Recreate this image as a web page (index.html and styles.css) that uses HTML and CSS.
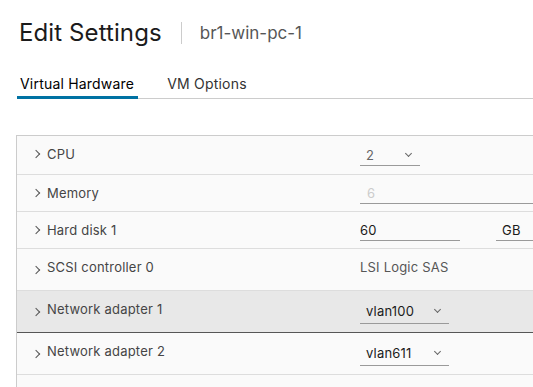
FILE: index.html
```html
<!DOCTYPE html>
<html lang="en">
<head>
    <meta charset="UTF-8">
    <title>Edit Settings</title>
    <link rel="stylesheet" href="styles.css">
</head>
<body>
    <!-- Dialog header -->
    <div class="header">
        <h1 class="title">Edit Settings</h1>
        <span class="divider"></span>
        <span class="subtitle">br1-win-pc-1</span>
    </div>

    <!-- Tabs -->
    <div class="tabs">
        <div class="tab active">Virtual Hardware</div>
        <div class="tab">VM Options</div>
    </div>

    <!-- Hardware list -->
    <div class="hw-table">
        <div class="row row-cpu">
            <div class="label"><span class="caret"></span>CPU</div>
            <div class="value">
                <div class="field select w-60 muted">2<span class="arrow"></span></div>
            </div>
        </div>
        <div class="row">
            <div class="label"><span class="caret"></span>Memory</div>
            <div class="value">
                <div class="field grow disabled">6</div>
            </div>
        </div>
        <div class="row">
            <div class="label"><span class="caret"></span>Hard disk 1</div>
            <div class="value">
                <div class="field input w-100">60</div>
                <div class="field unit grow">GB</div>
            </div>
        </div>
        <div class="row row-tall">
            <div class="label"><span class="caret low"></span>SCSI controller 0</div>
            <div class="value">
                <div class="plain">LSI Logic SAS</div>
            </div>
        </div>
        <div class="row row-tall selected">
            <div class="label"><span class="caret low"></span>Network adapter 1</div>
            <div class="value">
                <div class="field select tall w-89">vlan100<span class="arrow"></span></div>
            </div>
        </div>
        <div class="row row-tall">
            <div class="label"><span class="caret low"></span>Network adapter 2</div>
            <div class="value">
                <div class="field select tall w-89">vlan611<span class="arrow"></span></div>
            </div>
        </div>
        <div class="row row-tail"></div>
    </div>
</body>
</html>
```

FILE: styles.css
```css
/* Base */
html, body {
    margin: 0;
    height: 387px;
    overflow: hidden;
    background: #fff;
    font-family: Inter, "Open Sans", sans-serif;
    color: #333;
}

/* Header */
.header {
    display: flex;
    align-items: center;
    padding: 16px 0 0 19px;
    height: 34px;
}

.title {
    margin: 0;
    font-size: 24px;
    font-weight: 400;
    color: #1b1b1b;
    line-height: 34px;
    letter-spacing: 0.1px;
}

.divider {
    width: 1px;
    height: 22px;
    background: #ccc;
    margin: 0 18px 0 19px;
}

.subtitle {
    font-size: 17px;
    color: #565656;
    line-height: 34px;
}

/* Tabs */
.tabs {
    display: flex;
    margin: 24px 0 0 17px;
    border-bottom: 1px solid #ccc;
}

.tab {
    padding: 0 3px 2px;
    margin-right: 26px;
    font-size: 14px;
    line-height: 20px;
    letter-spacing: 0.2px;
    color: #333;
    border-bottom: 3px solid transparent;
    margin-bottom: -1px;
}

.tab.active {
    padding-right: 4px;
    color: #000;
    border-bottom-color: #0072a3;
}

/* Hardware table */
.hw-table {
    margin: 36px 0 0 16px;
    width: 540px;
    border-top: 1px solid #ccc;
    border-left: 1px solid #ccc;
    background: #fafafa;
}

.row {
    display: flex;
    height: 37px;
    border-bottom: 1px solid #ddd;
    box-sizing: border-box;
}

.row-cpu {
    height: 39px;
}

.row-tall {
    height: 42px;
}

.row-tail {
    height: 20px;
    border-bottom: none;
}

.row.selected {
    background: #e8e8e8;
    border-bottom-color: #565656;
}

.label {
    width: 343px;
    display: flex;
    align-items: flex-start;
    padding: 8px 0 0 16px;
    box-sizing: border-box;
    font-size: 13px;
    line-height: 20px;
    letter-spacing: 0.2px;
    color: #454545;
}

.caret {
    width: 5px;
    height: 5px;
    margin: 7px 8px 0 0;
    border-right: 1px solid #555;
    border-top: 1px solid #555;
    transform: rotate(45deg);
}

.caret.low {
    margin-top: 10px;
}

.value {
    flex: 1;
    display: flex;
    align-items: flex-start;
    padding-top: 8px;
    font-size: 13px;
    letter-spacing: 0.2px;
    color: #1b1b1b;
}

.row-cpu .value {
    padding-top: 9px;
}

.plain {
    line-height: 20px;
    color: #565656;
}

.field {
    display: flex;
    align-items: center;
    height: 20px;
    border-bottom: 1px solid #9a9a9a;
    box-sizing: content-box;
}

.field.tall {
    height: 24px;
}

.select {
    padding-left: 6px;
    position: relative;
}

.input {
    padding-left: 0;
}

.unit {
    margin-left: 36px;
    padding-left: 6px;
}

.w-60 { width: 54px; }
.w-89 { width: 83px; }
.w-100 { width: 100px; }
.grow { flex: 1; }

.muted {
    color: #666;
}

.disabled {
    padding-left: 7px;
    color: #ccc;
}

.arrow {
    position: absolute;
    right: 9px;
    top: 50%;
    width: 4px;
    height: 4px;
    margin-top: -4px;
    border-right: 1px solid #666;
    border-bottom: 1px solid #666;
    transform: rotate(45deg);
}
```
